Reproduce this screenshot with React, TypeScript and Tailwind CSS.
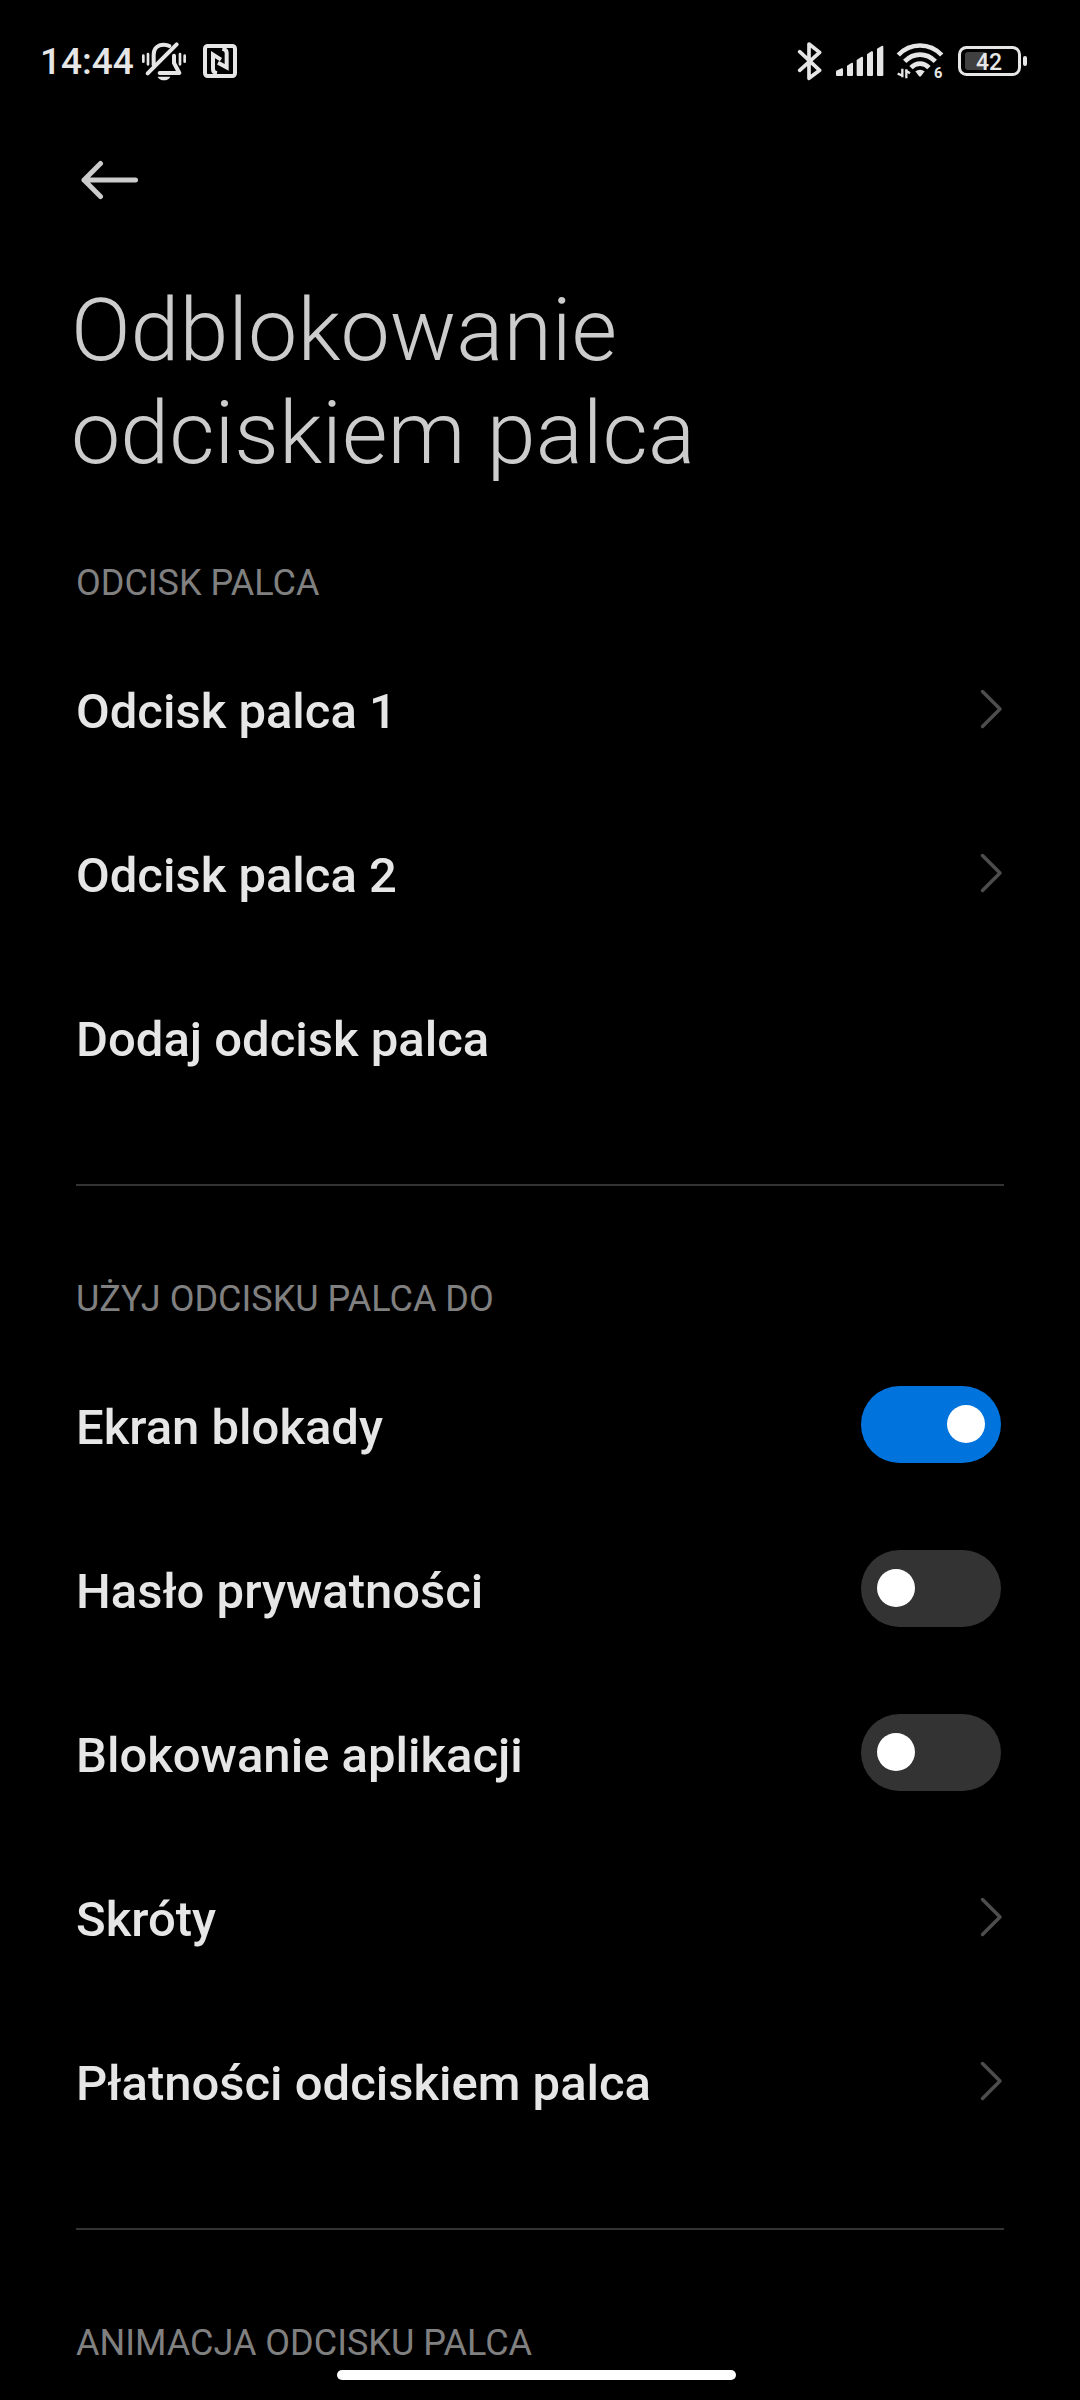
import React, { useState } from 'react';

export default function App() {
  const [lockScreen, setLockScreen] = useState(true);
  const [privacyPassword, setPrivacyPassword] = useState(false);
  const [appLock, setAppLock] = useState(false);

  return (
    <div className="min-h-screen bg-black font-[Roboto,sans-serif] text-[#e6e6e6]">
      <StatusBar />

      <header>
        <div className="flex h-[116px] items-center px-[76px]">
          <button type="button" aria-label="Wstecz" className="p-1">
            <BackIcon />
          </button>
        </div>
        <h1 className="max-w-[800px] px-[71px] pt-10 text-[88px] leading-[103px] font-light text-[#cccccc]">
          Odblokowanie odciskiem palca
        </h1>
      </header>

      <main className="px-[76px]">
        <section className="border-b-2 border-[#333333] pt-[54px] pb-[66px]">
          <SectionTitle>ODCISK PALCA</SectionTitle>
          <LinkRow label="Odcisk palca 1" chevron />
          <LinkRow label="Odcisk palca 2" chevron />
          <LinkRow label="Dodaj odcisk palca" />
        </section>

        <section className="border-b-2 border-[#333333] pt-[68px] pb-[66px]">
          <SectionTitle>UŻYJ ODCISKU PALCA DO</SectionTitle>
          <SwitchRow label="Ekran blokady" checked={lockScreen} onChange={setLockScreen} />
          <SwitchRow label="Hasło prywatności" checked={privacyPassword} onChange={setPrivacyPassword} />
          <SwitchRow label="Blokowanie aplikacji" checked={appLock} onChange={setAppLock} />
          <LinkRow label="Skróty" chevron />
          <LinkRow label="Płatności odciskiem palca" chevron />
        </section>

        <section className="pt-[68px]">
          <SectionTitle>ANIMACJA ODCISKU PALCA</SectionTitle>
        </section>
      </main>

      {/* Gesture bar */}
      <div className="pointer-events-none fixed inset-x-0 bottom-5 flex justify-center pr-[7px]">
        <div className="h-[10px] w-[399px] rounded-full bg-white" />
      </div>
    </div>
  );
}

const StatusBar = () => (
  <div className="flex h-[122px] items-center justify-between pr-[53px] pl-10">
    <div className="flex items-center">
      <span className="pt-0.5 text-[37px] leading-[44px] font-medium">14:44</span>
      <MutedBellIcon />
      <NfcIcon />
    </div>
    <div className="flex items-center">
      <BluetoothIcon />
      <SignalIcon />
      <WifiIcon />
      <BatteryIcon />
    </div>
  </div>
);

const SectionTitle = ({ children }: { children: React.ReactNode }) => (
  <h2 className="flex h-[88px] items-center pt-0.5 text-[36px] leading-[44px] text-[#808080]">{children}</h2>
);

const LinkRow = ({ label, chevron }: { label: string; chevron?: boolean }) => (
  <button type="button" className="flex h-[164px] w-full items-center justify-between text-left">
    <span className="pt-2 text-[49px] leading-[58px] font-medium">{label}</span>
    {chevron && <ChevronIcon />}
  </button>
);

const SwitchRow = ({ label, checked, onChange }: {
  label: string;
  checked: boolean;
  onChange: (value: boolean) => void;
}) => (
  <label className="flex h-[164px] items-center justify-between pr-[3px]">
    <span className="pt-2 text-[49px] leading-[58px] font-medium">{label}</span>
    <input
      type="checkbox"
      role="switch"
      checked={checked}
      onChange={(e) => onChange(e.target.checked)}
      className="flex h-[77px] w-[140px] shrink-0 appearance-none items-center rounded-full bg-[#333333] px-4 before:size-[38px] before:rounded-full before:bg-white checked:justify-end checked:bg-[#0073dd]"
    />
  </label>
);

const BackIcon = () => (
  <svg width="60" height="40" viewBox="0 0 60 40" fill="none" stroke="#cccccc" strokeWidth="5" strokeLinecap="round" strokeLinejoin="round">
    <path d="M20.500 3.500L4 20L20.500 36.500M4 20H55.500" />
  </svg>
);

const ChevronIcon = () => (
  <svg width="24" height="42" viewBox="0 0 24 42" fill="none" stroke="#4d4d4d" strokeWidth="3.500" strokeLinecap="round" strokeLinejoin="round" className="shrink-0">
    <path d="M2.500 4.500L20 22L2.500 39.500" />
  </svg>
);

const MutedBellIcon = () => (
  <svg width="46" height="40" viewBox="0 0 138 120" fill="none" stroke="#e6e6e6" strokeWidth="12" strokeLinecap="round" strokeLinejoin="round" className="ml-[7px]">
    <path d="M7 44V62M21 39V70M131 44V62M117 39V70" strokeWidth="8" />
    <path d="M38 72V41C38 23 50 11 68 11C75 11 80 12 85 15" />
    <path d="M99 44V66L115 96H56" />
    <path d="M20 97L107 10" />
    <path d="M50 107H88C84 115 77 118 69 118S54 115 50 107Z" fill="#e6e6e6" stroke="none" />
  </svg>
);

const NfcIcon = () => (
  <svg width="34" height="34" viewBox="0 0 102 102" fill="none" stroke="#e6e6e6" className="ml-4">
    <rect x="6" y="6" width="90" height="90" rx="8" strokeWidth="12" />
    <path d="M42 88Q30 86 30 76V32L54 47" strokeWidth="12" />
    <path d="M58 14Q71 16 71 26V70L45 56" strokeWidth="12" />
  </svg>
);

const BluetoothIcon = () => (
  <svg width="26" height="40" viewBox="0 0 78 120" fill="none" stroke="#e6e6e6" strokeWidth="11" strokeLinecap="round" strokeLinejoin="round">
    <path d="M11 32L71 88L39 112V9L71 34L11 88" />
  </svg>
);

const SignalIcon = () => (
  <svg width="50" height="32" viewBox="0 0 150 96" fill="#e6e6e6" className="ml-[13px]">
    <path d="M3 80Q3 77 7 76L20 70Q24 69 24 74V90Q24 93 21 93H6Q3 93 3 90Z" />
    <path d="M36 62L49 54Q54 52 54 57V90Q54 93 51 93H39Q36 93 36 90Z" />
    <path d="M65 45L79 36Q84 34 84 39V90Q84 93 81 93H68Q65 93 65 90Z" />
    <path d="M96 28L109 19Q114 17 114 22V90Q114 93 111 93H99Q96 93 96 90Z" />
    <path d="M126 11L140 3Q145 1 145 6V90Q145 93 142 93H129Q126 93 126 90Z" />
  </svg>
);

const WifiIcon = () => (
  <svg width="48" height="44" viewBox="0 0 144 132" fill="none" stroke="#e6e6e6" className="ml-[11px]">
    <path d="M7 48C43 10 101 10 137 48" strokeWidth="14" />
    <path d="M26 67C53 40 91 40 118 67" strokeWidth="14" />
    <path d="M45 86C61 70 83 70 99 86" strokeWidth="14" />
    <path d="M58 97Q72 87 86 97L76 110Q72 115 68 110Z" fill="#e6e6e6" stroke="none" />
    <path d="M19 89V115M22 111L5 104M31 118V91M28 94L42 103" strokeWidth="7" />
    <text x="114" y="118" fontSize="44" fontWeight="700" fill="#e6e6e6" stroke="none">6</text>
  </svg>
);

const BatteryIcon = () => (
  <svg width="70" height="30" viewBox="0 0 70 30" className="ml-[13px]">
    <rect x="2.500" y="1.500" width="60" height="27" rx="7" fill="none" stroke="#e6e6e6" strokeWidth="3" />
    <rect x="8" y="6" width="22" height="18" rx="3" fill="#404040" />
    <rect x="66" y="10" width="4" height="10" rx="2" fill="#e6e6e6" />
    <text x="32" y="24" textAnchor="middle" fontSize="23" fontWeight="500" fill="#e6e6e6">42</text>
  </svg>
);
